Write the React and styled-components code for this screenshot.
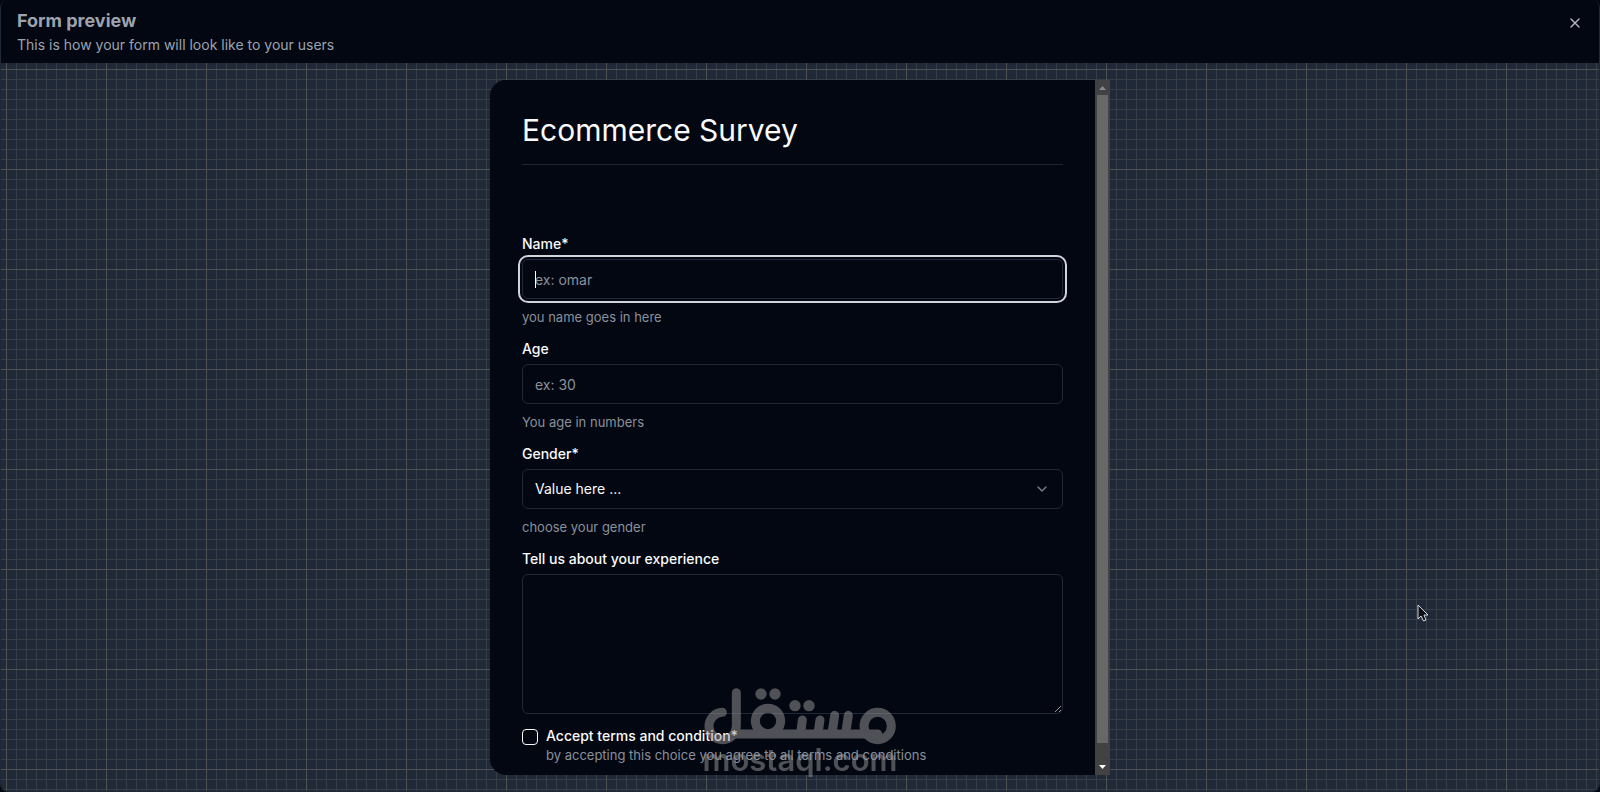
import { useState } from "react";
import styled, { createGlobalStyle } from "styled-components";
import { ChevronDown, X } from "lucide-react";

export default function App() {
  const [gender, setGender] = useState("");

  return (
    <>
      <GlobalStyle />
      <Dialog role="dialog" aria-labelledby="preview-title">
        <Header>
          <div>
            <Heading id="preview-title">Form preview</Heading>
            <Subheading>This is how your form will look like to your users</Subheading>
          </div>
          <CloseButton type="button" aria-label="Close">
            <X size={16} />
          </CloseButton>
        </Header>
        <Canvas>
          <Paper />
          <Card>
            <Form>
              <Title>Ecommerce Survey</Title>
              <Fields>
                <Field>
                  <Label htmlFor="name">Name*</Label>
                  <InputBox>
                    <Input id="name" placeholder="ex: omar" $active />
                    <Caret />
                  </InputBox>
                  <Hint>you name goes in here</Hint>
                </Field>
                <Field>
                  <Label htmlFor="age">Age</Label>
                  <Input id="age" placeholder="ex: 30" />
                  <Hint>You age in numbers</Hint>
                </Field>
                <Field>
                  <Label htmlFor="gender">Gender*</Label>
                  <InputBox>
                    <Select id="gender" value={gender} onChange={(e) => setGender(e.target.value)}>
                      <option value="">Value here ...</option>
                      <option value="male">Male</option>
                      <option value="female">Female</option>
                    </Select>
                    <Chevron size={16} />
                  </InputBox>
                  <Hint>choose your gender</Hint>
                </Field>
                <Field>
                  <Label htmlFor="experience">Tell us about your experience</Label>
                  <TextArea id="experience" />
                </Field>
                <CheckRow>
                  <Checkbox id="terms" type="checkbox" />
                  <div>
                    <CheckLabel htmlFor="terms">Accept terms and condition*</CheckLabel>
                    <CheckHint>by accepting this choice you agree to all terms and conditions</CheckHint>
                  </div>
                </CheckRow>
              </Fields>
            </Form>
            <Scrollbar />
          </Card>
        </Canvas>
      </Dialog>
      <Watermark />
      <Pointer />
    </>
  );
}

function Paper() {
  return (
    <PaperSvg aria-hidden="true">
      <defs>
        <pattern id="paper" width="100" height="100" x="5" y="6" patternUnits="userSpaceOnUse">
          <path
            d="M10.5 0V100M20.5 0V100M30.5 0V100M40.5 0V100M50.5 0V100M60.5 0V100M70.5 0V100M80.5 0V100M90.5 0V100M0 10.5H100M0 20.5H100M0 30.5H100M0 40.5H100M0 50.5H100M0 60.5H100M0 70.5H100M0 80.5H100M0 90.5H100"
            stroke="#373e45"
          />
          <path d="M0.5 0V100M0 0.5H100" stroke="#505153" />
        </pattern>
      </defs>
      <rect width="100%" height="100%" fill="url(#paper)" />
    </PaperSvg>
  );
}

function Scrollbar() {
  return (
    <Track aria-hidden="true">
      <Arrow viewBox="0 0 15 15">
        <path d="M4 10L7.5 6L11 10Z" fill="#858994" />
      </Arrow>
      <Thumb />
      <Rest />
      <Arrow viewBox="0 0 15 15">
        <path d="M4 5L7.5 9L11 5Z" fill="#fff" />
      </Arrow>
    </Track>
  );
}

function Watermark() {
  return (
    <Mark>
      <MarkLogo viewBox="72 54 576 171" aria-hidden="true">
        <g fill="none" stroke="#9c9c9e" strokeWidth="27" strokeLinecap="round">
          <path d="M127 127A41 41 0 1 0 169 168V68M169 192H593" />
          <circle cx="264" cy="153" r="38" />
          <circle cx="593" cy="168" r="41" />
          <path d="M367 150L362 190M420 150L414 190M464 136L456 190M505 136L497 190" />
        </g>
        <g fill="#9c9c9e">
          <circle cx="243" cy="72" r="17" />
          <circle cx="285" cy="72" r="17" />
          <circle cx="345" cy="107" r="17" />
          <circle cx="387" cy="107" r="17" />
        </g>
      </MarkLogo>
      <MarkText>mostaql.com</MarkText>
    </Mark>
  );
}

function Pointer() {
  return (
    <PointerSvg viewBox="0 0 12 18" aria-hidden="true">
      <path
        d="M1 1V15L4 12L6.5 17L9 16L7 11H11Z"
        fill="#0b0d17"
        stroke="#d4d8df"
        strokeLinejoin="round"
      />
    </PointerSvg>
  );
}

const GlobalStyle = createGlobalStyle`
  * {
    box-sizing: border-box;
  }
  body {
    margin: 0;
    background: #030711;
    color: #f9fafb;
    font-family: Inter, "Liberation Sans", sans-serif;
    font-size: 14px;
    line-height: 20px;
  }
  input, select, textarea, button {
    font: inherit;
    color: inherit;
  }
  h1, h2, p {
    margin: 0;
  }
`;

const Dialog = styled.div`
  display: flex;
  flex-direction: column;
  height: 100vh;
  border: 1px solid #1f2937;
  border-top: 0;
  border-radius: 8px;
  overflow: hidden;
`;

const Header = styled.header`
  display: flex;
  justify-content: space-between;
  align-items: flex-start;
  padding: 7px 16px 8px;
  background: #030711;
`;

const Heading = styled.h2`
  color: #9ca3af;
  font-size: 18px;
  line-height: 28px;
  font-weight: 700;
`;

const Subheading = styled.p`
  color: #9ca3af;
`;

const CloseButton = styled.button`
  display: flex;
  margin-top: 8px;
  padding: 0;
  border: 0;
  background: none;
  color: #b2b5bb;
`;

const Canvas = styled.main`
  position: relative;
  flex: 1;
  min-height: 0;
  display: flex;
  justify-content: center;
  padding: 17px 16px 16px;
  background: #1f2937;
`;

const PaperSvg = styled.svg`
  position: absolute;
  inset: 0;
  width: 100%;
  height: 100%;
`;

const Card = styled.div`
  position: relative;
  display: flex;
  width: 100%;
  max-width: 620px;
  border-radius: 16px 0 0 16px;
  background: #030711;
  overflow: hidden;
`;

const Form = styled.form`
  flex: 1;
  padding: 32px;
  overflow-y: auto;
  scrollbar-width: none;
`;

const Title = styled.h1`
  padding-bottom: 16px;
  border-bottom: 1px solid #1f2530;
  font-size: 30px;
  line-height: 36px;
  font-weight: 400;
`;

const Fields = styled.div`
  display: flex;
  flex-direction: column;
  gap: 14px;
  padding-top: 71px;
`;

const Field = styled.div`
  display: flex;
  flex-direction: column;
  gap: 8px;
`;

const Label = styled.label`
  font-weight: 500;
  line-height: 15px;
`;

const InputBox = styled.div`
  position: relative;
  display: flex;
`;

const Input = styled.input`
  width: 100%;
  height: 40px;
  padding: 8px 12px;
  border: 1px solid #1f2937;
  border-radius: 6px;
  background: #030711;
  outline: ${(props) => (props.$active ? "2px solid #d1d5db" : "none")};
  outline-offset: 2px;
  &::placeholder {
    color: #8a909b;
    opacity: 1;
  }
`;

const Caret = styled.span`
  position: absolute;
  left: 13px;
  top: 12px;
  width: 1px;
  height: 17px;
  background: #fff;
`;

const Select = styled.select`
  width: 100%;
  height: 40px;
  padding: 8px 12px;
  border: 1px solid #1f2937;
  border-radius: 6px;
  background: #030711;
  appearance: none;
`;

const Chevron = styled(ChevronDown)`
  position: absolute;
  right: 13px;
  top: 12px;
  opacity: 0.5;
  pointer-events: none;
`;

const TextArea = styled.textarea`
  height: 140px;
  padding: 8px 12px;
  border: 1px solid #1f2937;
  border-radius: 6px;
  background: #030711;
  color-scheme: dark;
  resize: vertical;
`;

const Hint = styled.p`
  color: #8a909b;
  font-size: 13px;
  line-height: 20px;
`;

const CheckRow = styled.div`
  display: flex;
  gap: 8px;
`;

const Checkbox = styled.input`
  flex: none;
  width: 16px;
  height: 16px;
  margin: 1px 0 0;
  border: 1px solid #f9fafb;
  border-radius: 4px;
  background: none;
  appearance: none;
  &:checked {
    background: #f9fafb;
  }
`;

const CheckLabel = styled(Label)`
  display: block;
`;

const CheckHint = styled(Hint)`
  margin-top: 2px;
`;

const Track = styled.div`
  display: flex;
  flex-direction: column;
  flex: none;
  width: 15px;
  background: #424242;
`;

const Arrow = styled.svg`
  flex: none;
  width: 15px;
  height: 15px;
`;

const Thumb = styled.div`
  flex: 39;
  margin: 0 2px;
  background: #686868;
`;

const Rest = styled.div`
  flex: 1;
`;

const Mark = styled.div`
  position: fixed;
  left: 50%;
  bottom: 17px;
  display: flex;
  flex-direction: column;
  align-items: center;
  width: 192px;
  margin-left: -96px;
  opacity: 0.5;
  pointer-events: none;
`;

const MarkLogo = styled.svg`
  width: 192px;
  height: 57px;
`;

const MarkText = styled.span`
  color: #9c9c9e;
  font-size: 31px;
  line-height: 30px;
  font-weight: 600;
`;

const PointerSvg = styled.svg`
  position: fixed;
  left: 1417px;
  top: 604px;
  width: 12px;
  height: 18px;
  pointer-events: none;
`;
